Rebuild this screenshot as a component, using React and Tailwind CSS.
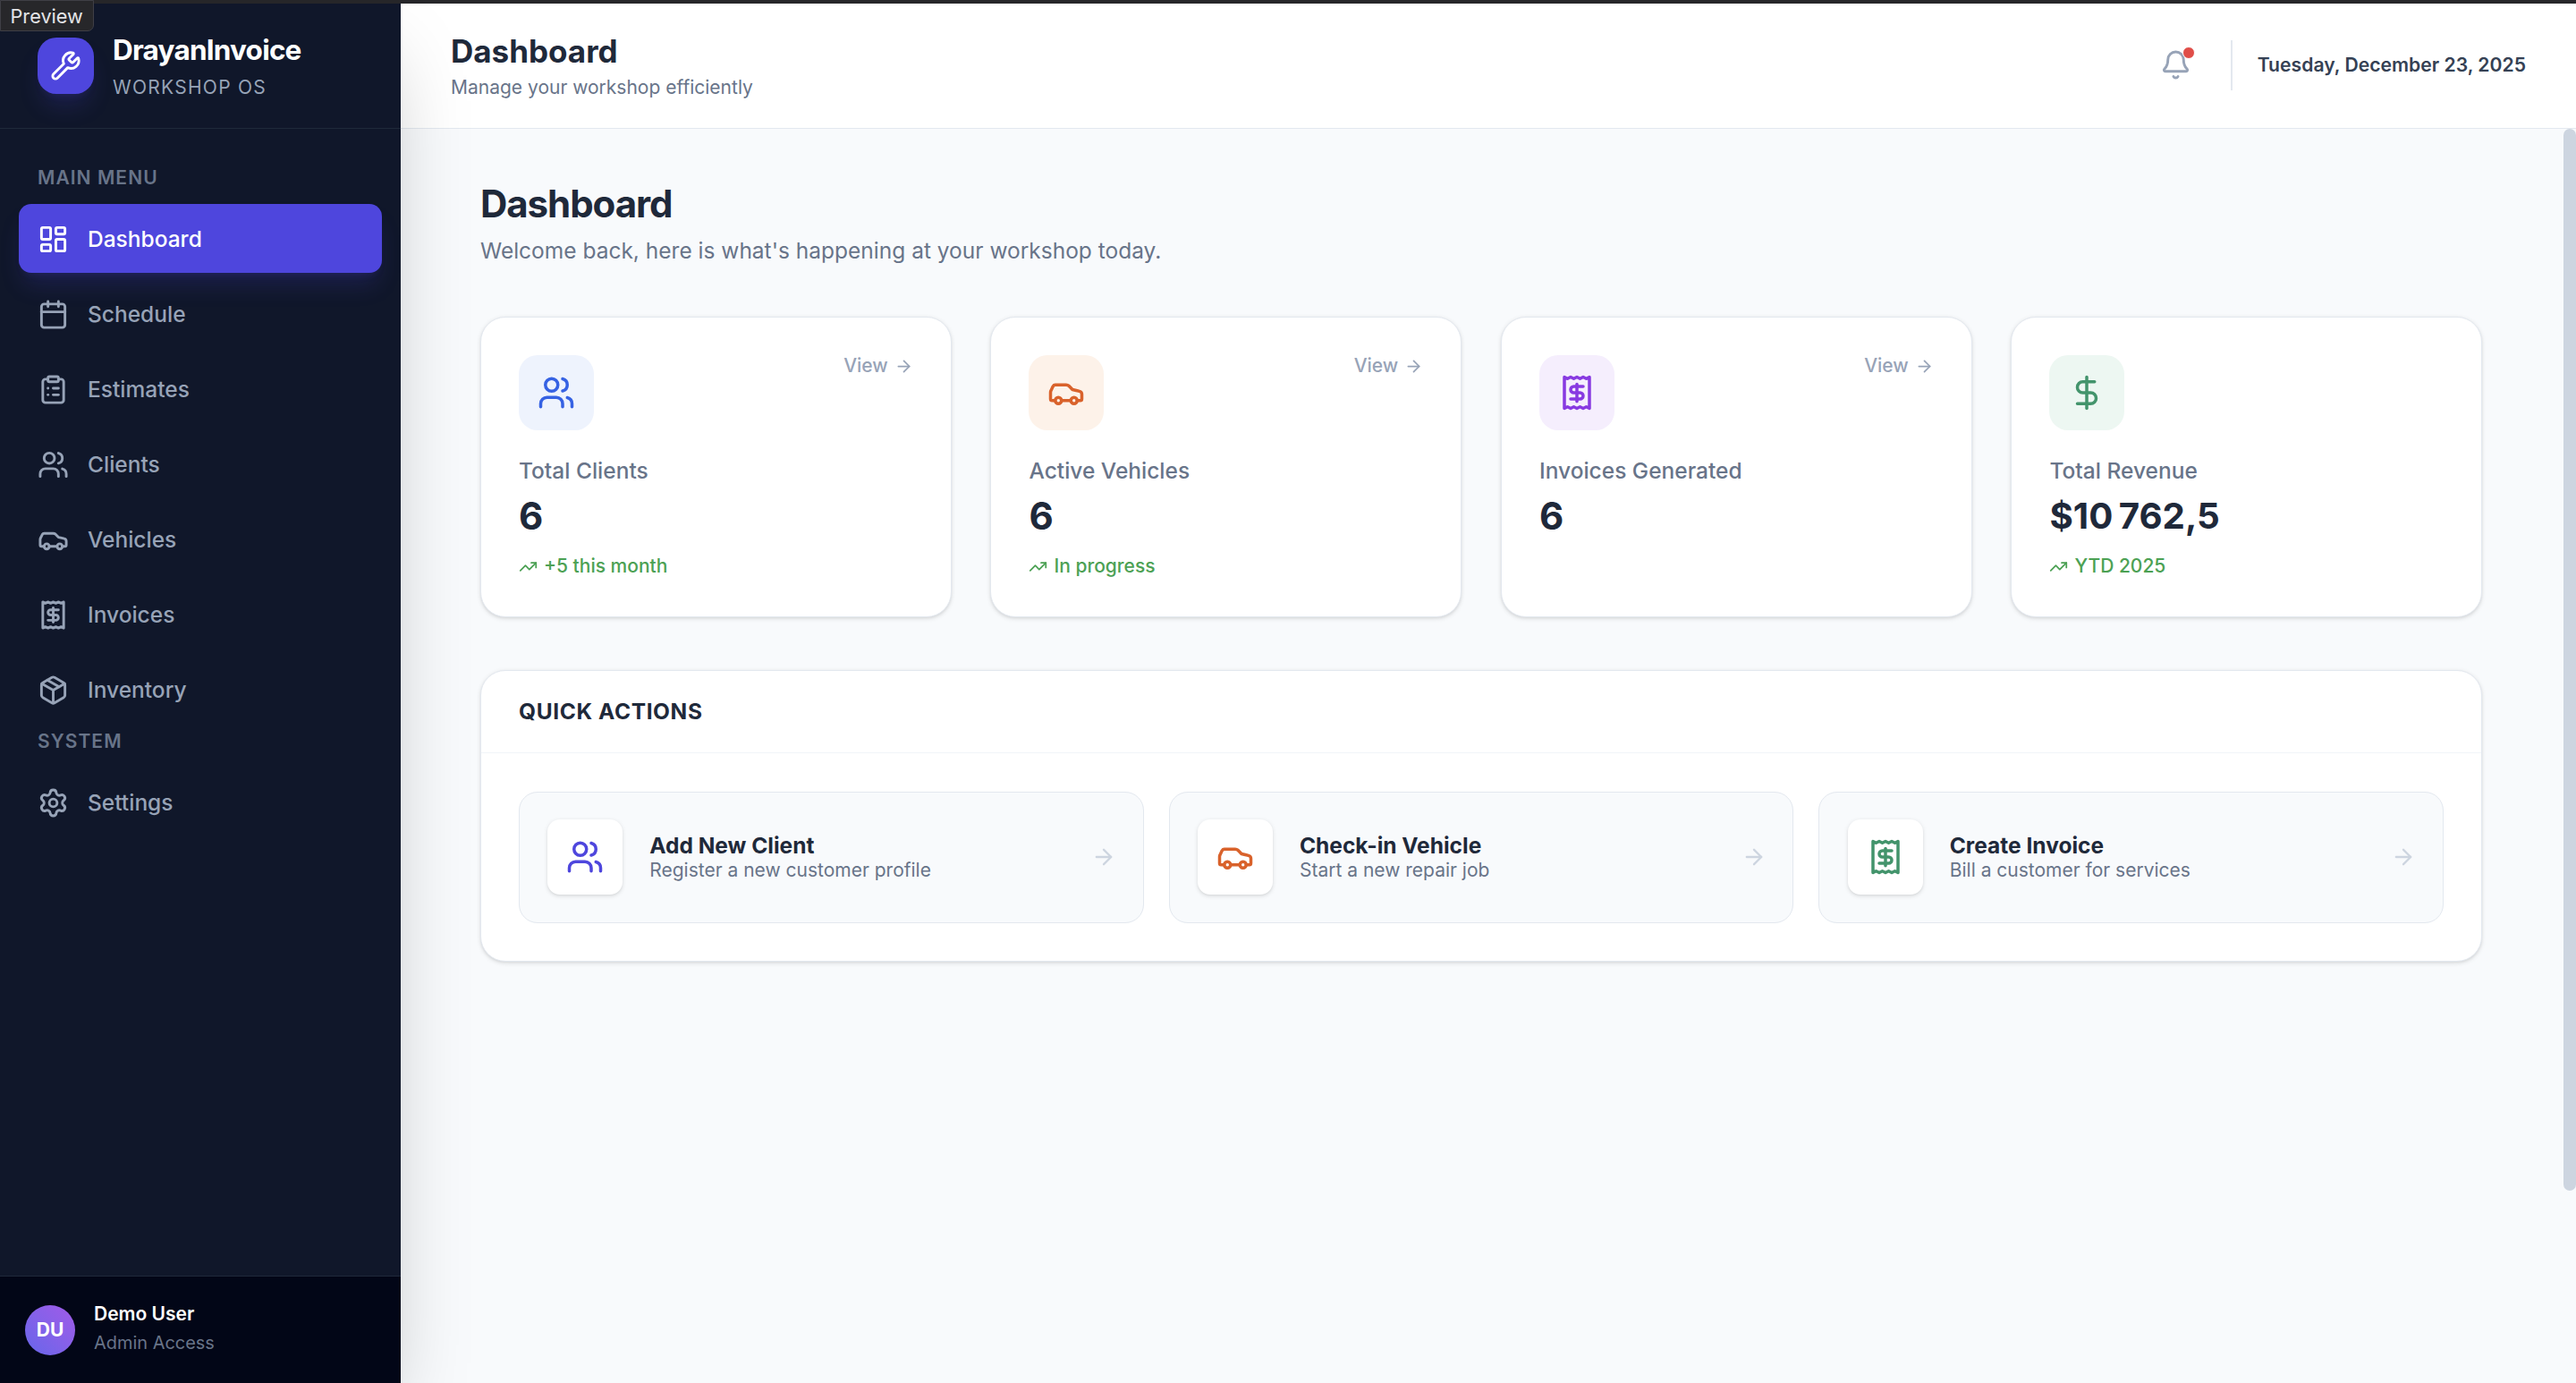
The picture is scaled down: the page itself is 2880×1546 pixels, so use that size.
import {
  ArrowRight,
  Bell,
  Calendar,
  Car,
  ClipboardList,
  DollarSign,
  LayoutDashboard,
  Package,
  Receipt,
  Settings,
  TrendingUp,
  Users,
  Wrench,
} from "lucide-react";

const menu = [
  { label: "Dashboard", icon: LayoutDashboard, active: true },
  { label: "Schedule", icon: Calendar },
  { label: "Estimates", icon: ClipboardList },
  { label: "Clients", icon: Users },
  { label: "Vehicles", icon: Car },
  { label: "Invoices", icon: Receipt },
  { label: "Inventory", icon: Package },
];

const stats = [
  { label: "Total Clients", value: "6", size: "text-2xl", note: "+5 this month", link: true, icon: Users, tint: "bg-[#eef3fd] text-[#3662e3]" },
  { label: "Active Vehicles", value: "6", size: "text-2xl", note: "In progress", link: true, icon: Car, tint: "bg-[#fdf2e9] text-[#d9622b]" },
  { label: "Invoices Generated", value: "6", size: "text-2xl", link: true, icon: Receipt, tint: "bg-[#f5eefd] text-[#883ae1]" },
  { label: "Total Revenue", value: "$10\u202f762,5", size: "text-[23px]", note: "YTD 2025", icon: DollarSign, tint: "bg-[#edf7f2] text-[#43946c]" },
];

const actions = [
  { title: "Add New Client", text: "Register a new customer profile", icon: Users, color: "text-[#4e46dd]" },
  { title: "Check-in Vehicle", text: "Start a new repair job", icon: Car, color: "text-[#d9622b]" },
  { title: "Create Invoice", text: "Bill a customer for services", icon: Receipt, color: "text-[#43946c]" },
];

const NavItem = ({ label, icon: Icon, active }) => (
  <a
    className={
      active
        ? "flex h-11 items-center gap-3 rounded-lg bg-[#4e46dd] px-3 pt-px text-sm font-medium text-white shadow-lg shadow-[#4e46dd]/20"
        : "flex h-11 items-center gap-3 rounded-lg px-3 pt-px text-sm font-medium text-[#97a3b7]"
    }
  >
    <Icon className="h-5 w-5" />
    {label}
  </a>
);

const StatCard = ({ label, value, size, note, link, icon: Icon, tint }) => (
  <div className="rounded-2xl border border-[#e3e8ef] bg-white p-6 shadow-sm">
    <div className="mb-4 flex items-start justify-between">
      <div className={`flex h-12 w-12 items-center justify-center rounded-xl ${tint}`}>
        <Icon className="h-6 w-6" />
      </div>
      {link && (
        <span className="-mt-px flex items-center gap-1 text-xs font-medium text-[#97a3b7]">
          View <ArrowRight className="h-3 w-3" />
        </span>
      )}
    </div>
    <p className="text-sm font-medium text-[#687489]">{label}</p>
    <p className={`mt-[3px] font-bold leading-8 tracking-tight text-[#1f293a] ${size}`}>{value}</p>
    {note && (
      <p className="mt-2 flex items-center gap-1 text-xs font-medium text-[#4ca154]">
        <TrendingUp className="h-3 w-3" />
        {note}
      </p>
    )}
  </div>
);

const ActionCard = ({ title, text, icon: Icon, color }) => (
  <div className="flex h-[84px] items-center gap-[17px] rounded-xl border border-[#e3e8ef] bg-[#f8fafc] pl-[18px] pr-[17px]">
    <div className={`flex h-12 w-12 items-center justify-center rounded-lg bg-white shadow-sm ${color}`}>
      <Icon className="h-6 w-6" />
    </div>
    <div className="flex-1 pb-px">
      <p className="text-sm font-bold text-[#1f293a]">{title}</p>
      <p className="-mt-[2px] text-xs text-[#687489]">{text}</p>
    </div>
    <ArrowRight className="h-4 w-4 text-[#cdd5e0]" />
  </div>
);

export default function App() {
  return (
    <div className="relative flex h-[883.43px] w-[1645.71px] flex-col overflow-hidden bg-[#f8fafc] font-['Inter',sans-serif] [zoom:1.75]">
      <div className="absolute left-0 top-0 z-30 w-[60px] rounded-br-sm border border-[#3f3f46] bg-[#27272a] pl-[6px] pt-px text-[12.4px] leading-[18px] text-[#e4e4e7]">
        Preview
      </div>
      <div className="h-[2.29px] bg-[#27272a]" />
      <div className="flex min-h-0 flex-1">
        {/* Sidebar */}
        <aside className="relative z-10 flex w-64 flex-col bg-[#10172a] shadow-2xl">
          <div className="flex h-20 items-center gap-3 border-b border-[#1f293a] px-6">
            <div className="flex h-9 w-9 items-center justify-center rounded-xl bg-[#4e46dd] text-white shadow-lg shadow-[#4e46dd]/20">
              <Wrench className="h-5 w-5" />
            </div>
            <div>
              <p className="text-lg font-bold leading-6 tracking-tight text-white">DrayanInvoice</p>
              <p className="mt-1 text-xs font-normal leading-4 tracking-[0.06em] text-[#97a3b7]">WORKSHOP OS</p>
            </div>
          </div>
          <nav className="flex flex-1 flex-col px-3 pt-[23.5px]">
            <p className="mb-[8.5px] px-3 text-xs font-semibold uppercase tracking-wider text-[#687489]">Main Menu</p>
            <div className="flex flex-col gap-1">
              {menu.map((item) => (
                <NavItem key={item.label} {...item} />
              ))}
            </div>
            <p className="mb-[8.5px] mt-[3.5px] px-3 text-xs font-semibold uppercase tracking-wider text-[#687489]">System</p>
            <NavItem label="Settings" icon={Settings} />
          </nav>
          <div className="flex h-[68.4px] items-center gap-3 border-t border-[#1f293a] bg-[#020617] px-4">
            <div className="flex h-8 w-8 items-center justify-center rounded-full bg-gradient-to-tr from-[#6566ea] to-[#a05ae8] text-xs font-bold text-white">
              DU
            </div>
            <div className="mb-[2px]">
              <p className="text-xs font-semibold leading-4 text-white">Demo User</p>
              <p className="mt-[2px] text-[11.4px] leading-4 text-[#687489]">Admin Access</p>
            </div>
          </div>
        </aside>

        <div className="flex min-w-0 flex-1 flex-col">
          {/* Top bar */}
          <header className="flex h-20 items-center justify-between border-b border-[#e3e8ef] bg-white px-8">
            <div className="pb-px">
              <h1 className="text-xl font-bold text-[#1f293a]">Dashboard</h1>
              <p className="mt-px text-xs text-[#687489]">Manage your workshop efficiently</p>
            </div>
            <div className="flex items-center gap-4 pb-px">
              <div className="relative mr-[9px]">
                <Bell className="h-5 w-5 text-[#97a3b7]" />
                <span className="absolute -right-0.5 -top-0.5 h-2 w-2 rounded-full border border-white bg-[#e04d48]" />
              </div>
              <div className="h-8 w-px bg-[#e3e8ef]" />
              <p className="text-[12.1px] font-semibold text-[#354154]">Tuesday, December 23, 2025</p>
            </div>
          </header>

          <div className="flex min-h-0 flex-1">
            <main className="flex-1 pr-px">
              <div className="mx-auto max-w-[1279px] pt-8">
                <h2 className="text-2xl font-bold tracking-tight text-[#1f293a]">Dashboard</h2>
                <p className="mb-8 mt-1 text-sm text-[#687489]">Welcome back, here is what's happening at your workshop today.</p>

                <div className="mb-[33.5px] grid grid-cols-4 gap-[25px]">
                  {stats.map((stat) => (
                    <StatCard key={stat.label} {...stat} />
                  ))}
                </div>

                <section className="rounded-2xl border border-[#e3e8ef] bg-white shadow-sm">
                  <h3 className="border-b border-[#f1f5f9] px-6 py-4 text-sm font-bold uppercase tracking-wide text-[#1f293a]">
                    Quick Actions
                  </h3>
                  <div className="grid grid-cols-3 gap-4 p-6 pt-[24.5px]">
                    {actions.map((action) => (
                      <ActionCard key={action.title} {...action} />
                    ))}
                  </div>
                </section>
              </div>
            </main>
            {/* Scrollbar */}
            <div className="w-2">
              <div className="h-[678px] rounded-full bg-[#cdd5e0]" />
            </div>
          </div>
        </div>
      </div>
    </div>
  );
}
